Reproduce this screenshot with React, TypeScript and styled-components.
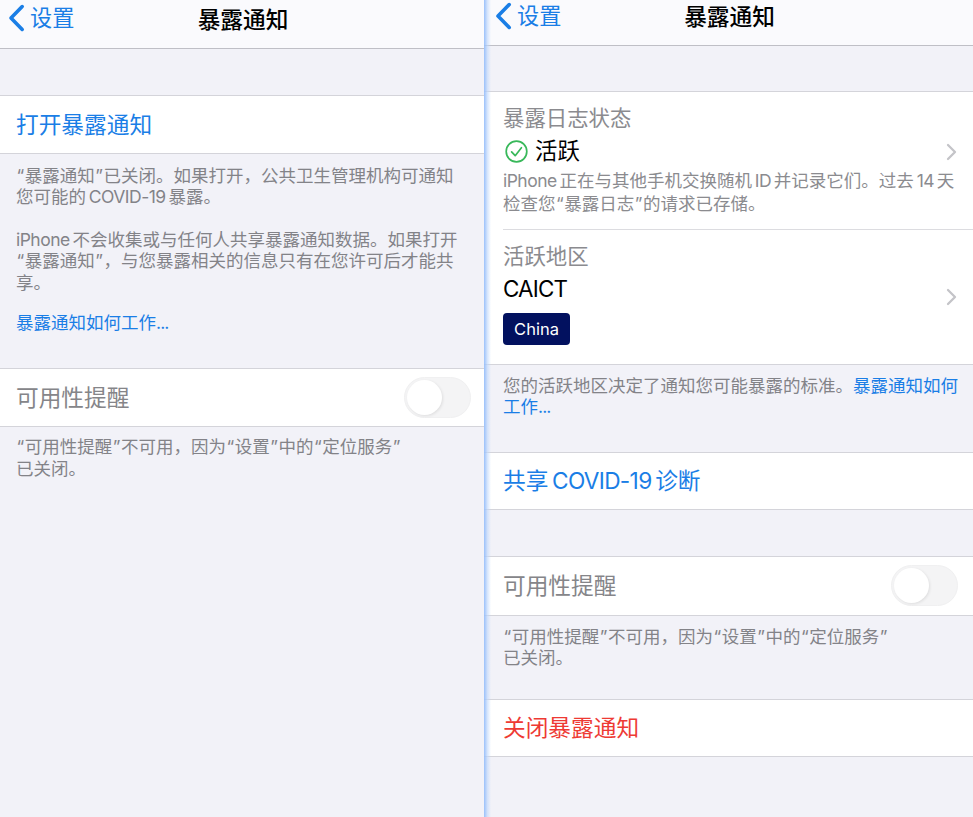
import React from "react";
import styled, { createGlobalStyle } from "styled-components";

const Global = createGlobalStyle`
  html, body { margin: 0; padding: 0; background: #f2f2f8; }
  body { font-family: Inter, "Noto Sans CJK SC", sans-serif; }
`;

const Page = styled.div`
  display: grid;
  grid-template-columns: 484px 489px;
  width: 973px;
  height: 817px;
  overflow: hidden;
`;

const Panel = styled.div<{ $inset: number; $end: number; $divider?: boolean }>`
  --inset: ${(p) => p.$inset}px;
  --end: ${(p) => p.$end}px;
  position: relative;
  display: flex;
  flex-direction: column;
  background: #f2f2f8;
  ${(p) =>
    p.$divider &&
    `&::before {
      content: "";
      position: absolute;
      z-index: 2;
      left: 0; top: 0; bottom: 0;
      width: 7px;
      background: linear-gradient(90deg, rgba(150,190,250,.95), rgba(190,215,252,.6) 50%, rgba(255,255,255,0));
    }`}
`;

const NavBar = styled.div<{ $height: number }>`
  position: relative;
  display: flex;
  align-items: center;
  justify-content: center;
  flex: none;
  box-sizing: border-box;
  height: ${(p) => p.$height}px;
  background: #fafafd;
  border-bottom: 1px solid #bfbfc6;
`;

const NavTitle = styled.div<{ $lift: number }>`
  font-size: 22.7px;
  font-weight: 500;
  line-height: 1;
  color: #000;
  padding-bottom: ${(p) => p.$lift}px;
  margin-left: 2px;
`;

const Back = styled.div<{ $left: number; $top: number }>`
  position: absolute;
  left: ${(p) => p.$left}px;
  top: ${(p) => p.$top}px;
  display: flex;
  align-items: center;
  gap: 5px;
  color: #1a7ee6;
  font-size: 22.2px;
  line-height: 28px;
`;

const Group = styled.div<{ $top: number }>`
  flex: none;
  margin-top: ${(p) => p.$top}px;
  background: #fff;
  border-top: 1px solid #d4d4da;
  border-bottom: 1px solid #d4d4da;
`;

const Row = styled.div<{ $tone?: "blue" | "red" | "gray"; $height?: number }>`
  display: flex;
  align-items: center;
  justify-content: space-between;
  box-sizing: border-box;
  height: ${(p) => p.$height ?? 57}px;
  padding: 0 var(--end) 0 var(--inset);
  font-size: 22.7px;
  line-height: 30px;
  white-space: nowrap;
  color: ${(p) => (p.$tone === "red" ? "#ee3a34" : p.$tone === "gray" ? "#858589" : "#1a7ee6")};
`;

const Footer = styled.div<{ $top?: number }>`
  flex: none;
  padding-left: var(--inset);
  padding-top: ${(p) => p.$top ?? 11}px;
  font-size: 17.5px;
  line-height: 21.4px;
  color: #838388;
  white-space: nowrap;
`;

const Para = styled.p<{ $gap?: number }>`
  margin: ${(p) => p.$gap ?? 0}px 0 0;
`;

const Link = styled.span`
  color: #1a7ee6;
`;

const Latin = styled.span<{ $before?: boolean; $after?: boolean }>`
  letter-spacing: -0.03em;
  margin-left: ${(p) => (p.$before ? "0.16em" : "0")};
  margin-right: ${(p) => (p.$after ? "0.16em" : "0")};
`;

const Dots = styled.span`
  letter-spacing: -0.05em;
`;

const Q = styled.span`
  display: inline-block;
  width: 0.5em;
  text-align: center;
`;

const Toggle = styled.div`
  position: relative;
  box-sizing: border-box;
  width: 67px;
  height: 41px;
  border-radius: 21px;
  background: #f4f4f5;
  border: 1px solid #f0f0f1;
  &::after {
    content: "";
    position: absolute;
    left: 2px;
    top: 2px;
    width: 35px;
    height: 35px;
    border-radius: 50%;
    background: #fff;
    box-shadow: 1px 1px 3px rgba(0, 0, 0, 0.09);
  }
`;

const InfoCell = styled.div<{ $height: number }>`
  position: relative;
  box-sizing: border-box;
  height: ${(p) => p.$height}px;
  padding-left: var(--inset);
  white-space: nowrap;
`;

const CellLabel = styled.div`
  padding-top: 11px;
  font-size: 21.4px;
  line-height: 30px;
  color: #8b8b8f;
`;

const CellValue = styled.div<{ $icon?: boolean }>`
  display: flex;
  align-items: center;
  gap: 7px;
  margin-top: 3px;
  padding-left: ${(p) => (p.$icon ? 2 : 0)}px;
  font-size: 22.4px;
  line-height: 30px;
  letter-spacing: ${(p) => (p.$icon ? 0 : "-0.8px")};
  color: #000;
`;

const CellNote = styled.div`
  margin-top: 3px;
  font-size: 17.5px;
  line-height: 23px;
  color: #8b8b8f;
`;

const Rule = styled.div`
  height: 1px;
  margin-left: var(--inset);
  background: #dcdce0;
`;

const Badge = styled.div`
  display: flex;
  align-items: center;
  justify-content: center;
  box-sizing: border-box;
  width: 67px;
  height: 32px;
  margin-top: 9px;
  border-radius: 4px;
  background: #02115f;
  color: #fff;
  font-size: 16.5px;
`;

const Disclosure = styled.svg<{ $top: number }>`
  position: absolute;
  right: 16px;
  top: ${(p) => p.$top}px;
`;

const Chevron = ({ top }: { top: number }) => (
  <Disclosure $top={top} width="11" height="18" viewBox="0 0 11 18" fill="none">
    <path d="M2 2l7 7-7 7" stroke="#c4c4c8" strokeWidth="2.3" strokeLinecap="round" strokeLinejoin="round" />
  </Disclosure>
);

const BackArrow = () => (
  <svg width="17" height="28" viewBox="0 0 17 28" fill="none">
    <path d="M14.2 2.6L3 14l11.2 11.4" stroke="#1a7ee6" strokeWidth="3.6" strokeLinecap="round" strokeLinejoin="round" />
  </svg>
);

const CheckCircle = () => (
  <svg width="23" height="23" viewBox="0 0 23 23" fill="none">
    <circle cx="11.5" cy="11.5" r="10.3" stroke="#38b85a" strokeWidth="1.7" />
    <path d="M6.6 11.8l3.6 3.9 6.2-8" stroke="#38b85a" strokeWidth="1.7" strokeLinecap="round" strokeLinejoin="round" />
  </svg>
);

const Nav = ({ height, left, top, lift }: { height: number; left: number; top: number; lift: number }) => (
  <NavBar $height={height}>
    <Back $left={left} $top={top}>
      <BackArrow />
      <span>设置</span>
    </Back>
    <NavTitle $lift={lift}>暴露通知</NavTitle>
  </NavBar>
);

const AvailabilityNote = ({ top }: { top: number }) => (
  <Footer $top={top}>
    <Q>“</Q>可用性提醒<Q>”</Q>不可用，因为<Q>“</Q>设置<Q>”</Q>中的<Q>“</Q>定位服务<Q>”</Q>
    <br />
    已关闭。
  </Footer>
);

export default function App() {
  return (
    <Page>
      <Global />
      <Panel $inset={16} $end={13}>
        <Nav height={49} left={8} top={4} lift={7} />
        <Group $top={46}>
          <Row>打开暴露通知</Row>
        </Group>
        <Footer>
          <Para>
            <Q>“</Q>暴露通知<Q>”</Q>已关闭。如果打开，公共卫生管理机构可通知
            <br />
            您可能的<Latin $before $after>COVID-19</Latin>暴露。
          </Para>
          <Para $gap={21}>
            <Latin $after>iPhone</Latin>不会收集或与任何人共享暴露通知数据。如果打开
            <br />
            <Q>“</Q>暴露通知<Q>”</Q>，与您暴露相关的信息只有在您许可后才能共
            <br />
            享。
          </Para>
          <Para $gap={19}>
            <Link>暴露通知如何工作<Dots>...</Dots></Link>
          </Para>
        </Footer>
        <Group $top={35}>
          <Row $tone="gray">
            可用性提醒
            <Toggle />
          </Row>
        </Group>
        <AvailabilityNote top={9} />
      </Panel>
      <Panel $inset={19} $end={15} $divider>
        <Nav height={46} left={11} top={2} lift={11} />
        <Group $top={45}>
          <InfoCell $height={137}>
            <CellLabel>暴露日志状态</CellLabel>
            <CellValue $icon>
              <CheckCircle />
              活跃
            </CellValue>
            <CellNote>
              <Latin $after>iPhone</Latin>正在与其他手机交换随机<Latin $before $after>ID</Latin>并记录它们。过去<Latin $before $after>14</Latin>天
              <br />
              检查您<Q>“</Q>暴露日志<Q>”</Q>的请求已存储。
            </CellNote>
            <Chevron top={51} />
          </InfoCell>
          <Rule />
          <InfoCell $height={134}>
            <CellLabel>活跃地区</CellLabel>
            <CellValue>CAICT</CellValue>
            <Badge>China</Badge>
            <Chevron top={58} />
          </InfoCell>
        </Group>
        <Footer $top={10}>
          您的活跃地区决定了通知您可能暴露的标准。<Link>暴露通知如何</Link>
          <br />
          <Link>工作<Dots>...</Dots></Link>
        </Footer>
        <Group $top={34}>
          <Row $height={56}>
            <span>
              共享<Latin $before $after>COVID-19</Latin>诊断
            </span>
          </Row>
        </Group>
        <Group $top={46}>
          <Row $tone="gray" $height={58}>
            可用性提醒
            <Toggle />
          </Row>
        </Group>
        <AvailabilityNote top={10} />
        <Group $top={30}>
          <Row $tone="red" $height={56}>关闭暴露通知</Row>
        </Group>
      </Panel>
    </Page>
  );
}
